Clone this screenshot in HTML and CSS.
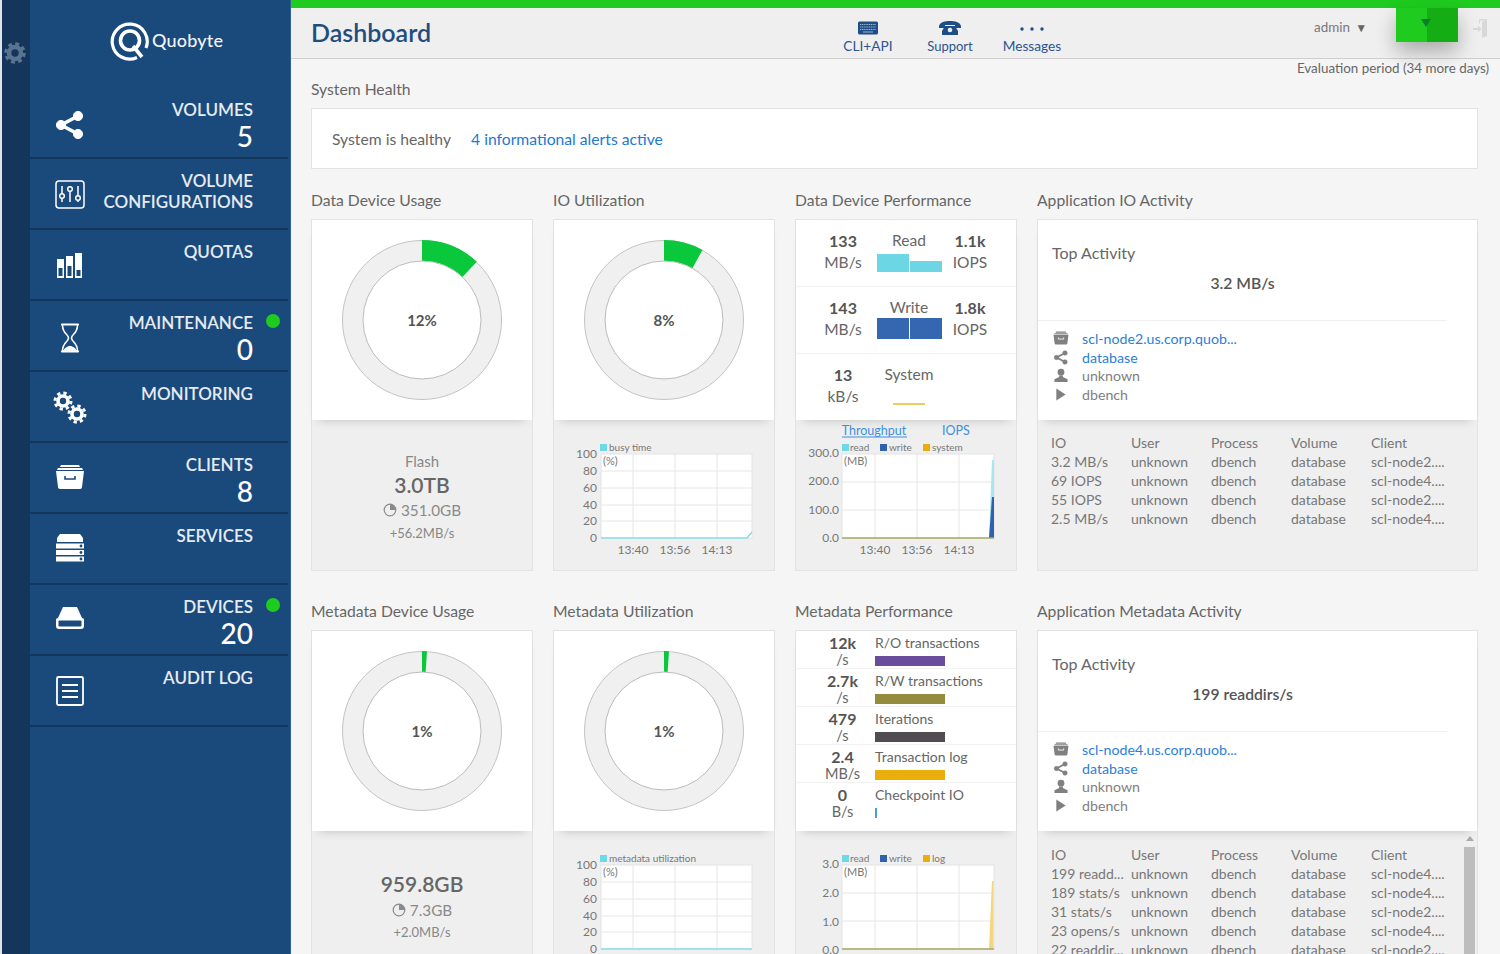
FILE: index.html
```html
<!DOCTYPE html>
<html lang="en">
<head>
<meta charset="utf-8">
<title>Dashboard</title>
<link rel="stylesheet" href="styles.css">
</head>
<body>
<svg class="defs" width="0" height="0" aria-hidden="true">
  <symbol id="i-tray" viewBox="0 0 30 26"><path d="M6 1h18l1 2H5zM3 4h24l1 2H2z" fill="currentColor"/><path d="M1 7h28l-2 16a2 2 0 0 1-2 2H5a2 2 0 0 1-2-2z" fill="currentColor"/><path d="M10 12v3h10v-3" fill="none" stroke="var(--cut,#1a4a7c)" stroke-width="1.6"/></symbol>
  <symbol id="i-share" viewBox="0 0 30 30"><g fill="currentColor" stroke="currentColor"><path d="M23 6 6 15l17 9" fill="none" stroke-width="3.6"/><circle cx="23" cy="6" r="4.6"/><circle cx="6" cy="15" r="4.6"/><circle cx="23" cy="24" r="4.6"/></g></symbol>
  <symbol id="i-user" viewBox="0 0 16 16"><circle cx="8" cy="4.5" r="3.6" fill="currentColor"/><path d="M6 8h4v1.5l5 2.5v3H1v-3l5-2.500z" fill="currentColor"/></symbol>
  <symbol id="i-play" viewBox="0 0 16 16"><path d="M3 1.500 13 8 3 14.500z" fill="currentColor"/></symbol>
  <symbol id="i-pie" viewBox="0 0 14 14"><circle cx="7" cy="7" r="5.800" fill="none" stroke="currentColor" stroke-width="1.200"/><path d="M7 7V1.200A5.800 5.800 0 0 1 12.800 7z" fill="currentColor"/></symbol>
</svg>

<div class="app">
  <aside class="side">
    <div class="strip">
      <svg class="gear" viewBox="0 0 24 24"><circle cx="12" cy="12" r="6.500" fill="none" stroke="currentColor" stroke-width="5"/><circle cx="12" cy="12" r="10" fill="none" stroke="currentColor" stroke-width="3.500" stroke-dasharray="4.200 3.650"/></svg>
    </div>
    <div class="sidemain">
      <div class="logo">
        <svg class="logomark" viewBox="0 0 40 40"><path d="M27 36.500A17.500 17.500 0 1 1 36 27" fill="none" stroke="#fff" stroke-width="3.200"/><circle cx="20" cy="19.500" r="9.500" fill="none" stroke="#fff" stroke-width="3.600"/><path d="M23 25l9 11" stroke="#fff" stroke-width="3.600" fill="none"/></svg>
        <span class="logotext">Quobyte</span>
      </div>
      <nav>
        <a class="item">
          <span class="ico ico-dn"><svg width="30" height="30"><use href="#i-share"/></svg></span>
          <span class="lbl">VOLUMES<b class="cnt">5</b></span>
        </a>
        <a class="item">
          <span class="ico ico-up"><svg width="30" height="30" viewBox="0 0 30 30"><rect x="1" y="2" width="28" height="27" rx="3" fill="none" stroke="currentColor" stroke-width="1.500"/><path d="M7 7v16M15 7v16M23 7v16" stroke="currentColor" stroke-width="1.500"/><g fill="#1a4a7c" stroke="currentColor" stroke-width="1.500"><circle cx="7" cy="17" r="2.300"/><circle cx="15" cy="10" r="2.300"/><circle cx="23" cy="19" r="2.300"/></g></svg></span>
          <span class="lbl">VOLUME<br>CONFIGURATIONS</span>
        </a>
        <a class="item">
          <span class="ico"><svg width="30" height="30" viewBox="0 0 30 30"><path d="M2 8h7v19H2zM11 5h7v22h-7zM20 2h7v25h-7z" fill="currentColor"/><path d="M3.500 17h4v8h-4zM12.500 15h4v10h-4zM21.500 19h4v6h-4z" fill="#1a4a7c"/></svg></span>
          <span class="lbl">QUOTAS</span>
        </a>
        <a class="item">
          <span class="ico ico-dn"><svg width="30" height="32" viewBox="0 0 30 32"><path d="M7 2.500h16M7 29.500h16" stroke="currentColor" stroke-width="2.200" stroke-linecap="round"/><path d="M7.500 3c0 9 6 9 6 13s-6 4-6 13h15c0-9-6-9-6-13s6-4 6-13" fill="none" stroke="currentColor" stroke-width="1.600"/><path d="M8.500 28.500c1-3 4.500-4.500 6.500-4.500s5.500 1.500 6.500 4.500z" fill="currentColor"/></svg></span>
          <span class="lbl">MAINTENANCE<b class="cnt">0</b></span>
          <i class="dot"></i>
        </a>
        <a class="item">
          <span class="ico ico-up"><svg width="34" height="34" viewBox="0 0 34 34"><g fill="none" stroke="currentColor"><circle cx="10" cy="11" r="5" stroke-width="3.600"/><circle cx="10" cy="11" r="8" stroke-width="3" stroke-dasharray="3.300 3"/><circle cx="24" cy="24" r="5" stroke-width="3.600"/><circle cx="24" cy="24" r="8" stroke-width="3" stroke-dasharray="3.300 3"/></g></svg></span>
          <span class="lbl">MONITORING</span>
        </a>
        <a class="item">
          <span class="ico ico-up2"><svg width="30" height="26"><use href="#i-tray"/></svg></span>
          <span class="lbl">CLIENTS<b class="cnt">8</b></span>
        </a>
        <a class="item">
          <span class="ico ico-up2"><svg width="30" height="30" viewBox="0 0 30 30"><path d="M5 1h20l3 4v4H2V5z" fill="currentColor"/><path d="M1 10.500h28v5H1zM1 17h28v5H1zM1 23.500h28v5H1z" fill="currentColor"/><g fill="#1a4a7c"><circle cx="26" cy="13" r="1.400"/><circle cx="26" cy="19.500" r="1.400"/><circle cx="26" cy="26" r="1.400"/></g></svg></span>
          <span class="lbl">SERVICES</span>
        </a>
        <a class="item">
          <span class="ico ico-up3"><svg width="30" height="26" viewBox="0 0 30 26"><path d="M8 2h14l5 11H3z" fill="currentColor"/><path d="M3 13h24a2 2 0 0 1 2 2v6a3 3 0 0 1-3 3H4a3 3 0 0 1-3-3v-6a2 2 0 0 1 2-2z" fill="currentColor"/><rect x="3.500" y="15.500" width="23" height="6" rx="1" fill="#1a4a7c"/></svg></span>
          <span class="lbl">DEVICES<b class="cnt">20</b></span>
          <i class="dot"></i>
        </a>
        <a class="item">
          <span class="ico ico-up"><svg width="30" height="32" viewBox="0 0 30 32"><rect x="2" y="2" width="26" height="28" rx="1.500" fill="none" stroke="currentColor" stroke-width="1.800"/><path d="M7 10h16M7 16h16M7 22h16" stroke="currentColor" stroke-width="1.800"/></svg></span>
          <span class="lbl">AUDIT LOG</span>
        </a>
      </nav>
    </div>
  </aside>

  <div class="page">
    <div class="topbar"></div>
    <header class="head">
      <h1 class="title">Dashboard</h1>
      <div class="tool">
        <svg width="22" height="14" viewBox="0 0 22 14"><rect x="1" y="0.500" width="20" height="13" rx="1.500" fill="#1f4d87"/><path d="M3 3.500h16M3 6h16M3 8.500h16" stroke="#9db4d0" stroke-width="1" stroke-dasharray="1.200 .6"/><path d="M6 11h10" stroke="#9db4d0"/></svg>
        <span>CLI+API</span>
      </div>
      <div class="tool">
        <svg width="24" height="14" viewBox="0 0 24 14"><path d="M1 5C2 1 7 0 12 0s10 1 11 5v2h-6V4H7v3H1z" fill="#1f4d87"/><path d="M7 5h10l3 5v4H4v-4z" fill="#1f4d87"/><circle cx="12" cy="9" r="2.300" fill="#efefef"/></svg>
        <span class="tool-s">Support</span>
      </div>
      <div class="tool">
        <svg width="24" height="14" viewBox="0 0 24 14"><g fill="#1f4d87"><circle cx="2" cy="8" r="1.700"/><circle cx="12" cy="8" r="1.700"/><circle cx="22" cy="8" r="1.700"/></g></svg>
        <span>Messages</span>
      </div>
      <div class="admin">admin <span class="caret">▼</span></div>
      <div class="alert"><span class="alert-l"></span><span class="alert-r"><i class="tri"></i></span></div>
      <svg class="exit" width="16" height="20" viewBox="0 0 16 20"><path d="M7 1h8v17l-5 2V4l3-1.500H8v3H7z" fill="#d8d8d8"/><path d="M1 10h5V7.500l3.500 3.500L6 14.500V12H1z" fill="#d8d8d8"/></svg>
    </header>

    <main class="content">
      <div class="evalrow">Evaluation period (34 more days)</div>
      <div class="stitle">System Health</div>
      <div class="health"><span>System is healthy</span><a class="healthlink">4 informational alerts active</a></div>

      <div class="grid">
        <section>
          <div class="stitle">Data Device Usage</div>
          <div class="card">
            <div class="white">
              <svg class="donut" width="220" height="200" viewBox="0 0 220 200"><circle class="ring" cx="110" cy="100" r="79.500"/><circle class="seg" cx="110" cy="100" r="69.500" stroke-dasharray="52.400 500" transform="rotate(-90 110 100)"/><circle class="hole" cx="110" cy="100" r="59"/><text class="pct" x="110" y="106">12%</text></svg>
            </div>
            <div class="gray usage">
              <div class="u-name">Flash</div>
              <div class="u-total">3.0TB</div>
              <div class="u-used"><svg width="14" height="14"><use href="#i-pie"/></svg>351.0GB</div>
              <div class="u-rate">+56.2MB/s</div>
            </div>
          </div>
        </section>

        <section>
          <div class="stitle">IO Utilization</div>
          <div class="card">
            <div class="white">
              <svg class="donut" width="220" height="200" viewBox="0 0 220 200"><circle class="ring" cx="110" cy="100" r="79.500"/><circle class="seg" cx="110" cy="100" r="69.500" stroke-dasharray="34.900 500" transform="rotate(-90 110 100)"/><circle class="hole" cx="110" cy="100" r="59"/><text class="pct" x="110" y="106">8%</text></svg>
            </div>
            <div class="gray">
              <svg class="chart" width="220" height="150" viewBox="554 420 220 150">
                <rect class="plot" x="601" y="454" width="151" height="84"/>
                <path class="gl" d="M633 454v84M675 454v84M717 454v84M601 471h151M601 488h151M601 505h151M601 521h151"/>
                <rect x="600" y="444" width="7" height="7" fill="#6fd8e6"/><text class="leg" x="609" y="451">busy time</text>
                <text class="unit" x="603" y="465">(%)</text>
                <g class="ax"><text x="597" y="458">100</text><text x="597" y="475">80</text><text x="597" y="492">60</text><text x="597" y="509">40</text><text x="597" y="525">20</text><text x="597" y="542">0</text></g>
                <g class="tx"><text x="633" y="554">13:40</text><text x="675" y="554">13:56</text><text x="717" y="554">14:13</text></g>
                <path d="M601 538h146l5-6" fill="none" stroke="#8adbe6" stroke-width="1.500"/>
              </svg>
            </div>
          </div>
        </section>

        <section>
          <div class="stitle">Data Device Performance</div>
          <div class="card">
            <div class="white">
              <div class="prow">
                <div class="pcol"><b>133</b><span>MB/s</span></div>
                <div class="pmid"><span class="plabel">Read</span><div class="pbars"><i class="b-read h18"></i><i class="b-read h11"></i></div></div>
                <div class="pcol pr"><b>1.1k</b><span>IOPS</span></div>
              </div>
              <div class="prow">
                <div class="pcol"><b>143</b><span>MB/s</span></div>
                <div class="pmid"><span class="plabel">Write</span><div class="pbars"><i class="b-write h20"></i><i class="b-write h20"></i></div></div>
                <div class="pcol pr"><b>1.8k</b><span>IOPS</span></div>
              </div>
              <div class="prow prow-last">
                <div class="pcol"><b>13</b><span>kB/s</span></div>
                <div class="pmid"><span class="plabel">System</span><div class="pbars"><i class="b-sys"></i></div></div>
              </div>
            </div>
            <div class="gray">
              <svg class="chart" width="220" height="150" viewBox="796 420 220 150">
                <text class="tab on" x="874" y="435">Throughput</text><text class="tab" x="956" y="435">IOPS</text>
                <path d="M842 437h65" stroke="#3d8ee0" stroke-width="1"/>
                <rect class="plot" x="842" y="454" width="152" height="84"/>
                <path class="gl" d="M875 454v84M917 454v84M959 454v84M842 482h152M842 510h152"/>
                <rect x="842" y="444" width="7" height="7" fill="#6fd8e6"/><text class="leg" x="850" y="451">read</text>
                <rect x="880" y="444" width="7" height="7" fill="#2f62ab"/><text class="leg" x="889" y="451">write</text>
                <rect x="923" y="444" width="7" height="7" fill="#e9ae0b"/><text class="leg" x="932" y="451">system</text>
                <text class="unit" x="844" y="465">(MB)</text>
                <g class="ax"><text x="839" y="457">300.0</text><text x="839" y="485">200.0</text><text x="839" y="514">100.0</text><text x="839" y="542">0.0</text></g>
                <g class="tx"><text x="875" y="554">13:40</text><text x="917" y="554">13:56</text><text x="959" y="554">14:13</text></g>
                <path d="M989 538l3-78h2v78z" fill="#a7e7ef"/>
                <path d="M989 538l3-41h2v41z" fill="#2f62ab"/>
                <path d="M842 538h152" stroke="#a8a860" stroke-width="1.500"/>
              </svg>
            </div>
          </div>
        </section>

        <section>
          <div class="stitle">Application IO Activity</div>
          <div class="card">
            <div class="white app-w">
              <div class="top-t">Top Activity</div>
              <div class="top-v">3.2 MB/s</div>
              <div class="top-list">
                <div><svg width="16" height="14"><use href="#i-tray"/></svg><a>scl-node2.us.corp.quob...</a></div>
                <div><svg width="16" height="15"><use href="#i-share"/></svg><a>database</a></div>
                <div><svg width="16" height="15"><use href="#i-user"/></svg><span>unknown</span></div>
                <div><svg width="16" height="15"><use href="#i-play"/></svg><span>dbench</span></div>
              </div>
            </div>
            <div class="gray tbl tbl-io">
              <div class="trow"><span>IO</span><span>User</span><span>Process</span><span>Volume</span><span>Client</span></div>
              <div class="trow"><span>3.2 MB/s</span><span>unknown</span><span>dbench</span><span>database</span><span>scl-node2....</span></div>
              <div class="trow"><span>69 IOPS</span><span>unknown</span><span>dbench</span><span>database</span><span>scl-node4....</span></div>
              <div class="trow"><span>55 IOPS</span><span>unknown</span><span>dbench</span><span>database</span><span>scl-node2....</span></div>
              <div class="trow"><span>2.5 MB/s</span><span>unknown</span><span>dbench</span><span>database</span><span>scl-node4....</span></div>
            </div>
          </div>
        </section>

        <section>
          <div class="stitle">Metadata Device Usage</div>
          <div class="card">
            <div class="white">
              <svg class="donut" width="220" height="200" viewBox="0 0 220 200"><circle class="ring" cx="110" cy="100" r="79.500"/><circle class="seg" cx="110" cy="100" r="69.500" stroke-dasharray="4.400 500" transform="rotate(-90 110 100)"/><circle class="hole" cx="110" cy="100" r="59"/><text class="pct" x="110" y="106">1%</text></svg>
            </div>
            <div class="gray usage usage-nn">
              <div class="u-total">959.8GB</div>
              <div class="u-used"><svg width="14" height="14"><use href="#i-pie"/></svg>7.3GB</div>
              <div class="u-rate">+2.0MB/s</div>
            </div>
          </div>
        </section>

        <section>
          <div class="stitle">Metadata Utilization</div>
          <div class="card">
            <div class="white">
              <svg class="donut" width="220" height="200" viewBox="0 0 220 200"><circle class="ring" cx="110" cy="100" r="79.500"/><circle class="seg" cx="110" cy="100" r="69.500" stroke-dasharray="4.400 500" transform="rotate(-90 110 100)"/><circle class="hole" cx="110" cy="100" r="59"/><text class="pct" x="110" y="106">1%</text></svg>
            </div>
            <div class="gray">
              <svg class="chart" width="220" height="150" viewBox="554 420 220 150">
                <rect class="plot" x="601" y="454" width="151" height="84"/>
                <path class="gl" d="M633 454v84M675 454v84M717 454v84M601 471h151M601 488h151M601 505h151M601 521h151"/>
                <rect x="600" y="444" width="7" height="7" fill="#6fd8e6"/><text class="leg" x="609" y="451">metadata utilization</text>
                <text class="unit" x="603" y="465">(%)</text>
                <g class="ax"><text x="597" y="458">100</text><text x="597" y="475">80</text><text x="597" y="492">60</text><text x="597" y="509">40</text><text x="597" y="525">20</text><text x="597" y="542">0</text></g>
                <path d="M601 538h151" fill="none" stroke="#8adbe6" stroke-width="1.500"/>
              </svg>
            </div>
          </div>
        </section>

        <section>
          <div class="stitle">Metadata Performance</div>
          <div class="card">
            <div class="white">
              <div class="mrow"><div class="mval"><b>12k</b><span>/s</span></div><div class="mmid"><span>R/O transactions</span><i class="mbar c-ro"></i></div></div>
              <div class="mrow"><div class="mval"><b>2.7k</b><span>/s</span></div><div class="mmid"><span>R/W transactions</span><i class="mbar c-rw"></i></div></div>
              <div class="mrow"><div class="mval"><b>479</b><span>/s</span></div><div class="mmid"><span>Iterations</span><i class="mbar c-it"></i></div></div>
              <div class="mrow"><div class="mval"><b>2.4</b><span>MB/s</span></div><div class="mmid"><span>Transaction log</span><i class="mbar c-tl"></i></div></div>
              <div class="mrow mrow-last"><div class="mval"><b>0</b><span>B/s</span></div><div class="mmid"><span>Checkpoint IO</span><i class="mbar c-cp"></i></div></div>
            </div>
            <div class="gray">
              <svg class="chart" width="220" height="150" viewBox="796 420 220 150">
                <rect class="plot" x="842" y="454" width="152" height="84"/>
                <path class="gl" d="M875 454v84M917 454v84M959 454v84M842 482h152M842 510h152"/>
                <rect x="842" y="444" width="7" height="7" fill="#6fd8e6"/><text class="leg" x="850" y="451">read</text>
                <rect x="880" y="444" width="7" height="7" fill="#2f62ab"/><text class="leg" x="889" y="451">write</text>
                <rect x="923" y="444" width="7" height="7" fill="#e9ae0b"/><text class="leg" x="932" y="451">log</text>
                <text class="unit" x="844" y="465">(MB)</text>
                <g class="ax"><text x="839" y="457">3.0</text><text x="839" y="486">2.0</text><text x="839" y="515">1.0</text><text x="839" y="543">0.0</text></g>
                <path d="M989 538l3-68h1.500v68z" fill="#f3d67c"/>
                <path d="M842 538h152" stroke="#a8a860" stroke-width="1.500"/>
              </svg>
            </div>
          </div>
        </section>

        <section>
          <div class="stitle">Application Metadata Activity</div>
          <div class="card">
            <div class="white app-w">
              <div class="top-t">Top Activity</div>
              <div class="top-v">199 readdirs/s</div>
              <div class="top-list">
                <div><svg width="16" height="14"><use href="#i-tray"/></svg><a>scl-node4.us.corp.quob...</a></div>
                <div><svg width="16" height="15"><use href="#i-share"/></svg><a>database</a></div>
                <div><svg width="16" height="15"><use href="#i-user"/></svg><span>unknown</span></div>
                <div><svg width="16" height="15"><use href="#i-play"/></svg><span>dbench</span></div>
              </div>
            </div>
            <div class="gray tbl">
              <div class="sbar"><i class="sb-up"></i><i class="sb-th"></i></div>
              <div class="trow"><span>IO</span><span>User</span><span>Process</span><span>Volume</span><span>Client</span></div>
              <div class="trow"><span>199 readd...</span><span>unknown</span><span>dbench</span><span>database</span><span>scl-node4....</span></div>
              <div class="trow"><span>189 stats/s</span><span>unknown</span><span>dbench</span><span>database</span><span>scl-node4....</span></div>
              <div class="trow"><span>31 stats/s</span><span>unknown</span><span>dbench</span><span>database</span><span>scl-node2....</span></div>
              <div class="trow"><span>23 opens/s</span><span>unknown</span><span>dbench</span><span>database</span><span>scl-node4....</span></div>
              <div class="trow"><span>22 readdir...</span><span>unknown</span><span>dbench</span><span>database</span><span>scl-node2....</span></div>
            </div>
          </div>
        </section>
      </div>
    </main>
  </div>
</div>
</body>
</html>
```

FILE: styles.css
```css
* { box-sizing: border-box; }
html, body { margin: 0; padding: 0; height: 100%; overflow: hidden; }
body { font-family: Lato, "Liberation Sans", sans-serif; background: #f5f5f5; color: #666; }
.defs { position: absolute; }
.app { display: flex; height: 954px; overflow: hidden; }

/* sidebar */
.side { flex: 0 0 291px; min-width: 0; display: flex; padding-left: 2px; background: #1a4a7c; border-right: 1px solid #2f6096; box-shadow: inset 2px 0 0 #dfe5ec; }
.strip { flex: 0 0 28px; background: #14365a; padding: 42px 2px 0; }
.gear { display: block; width: 22px; height: 22px; margin-left: 0; color: #5a7490; }
.sidemain { flex: 1; min-width: 0; }
.logo { height: 88px; padding: 20px 0 0 80px; display: flex; align-items: flex-start; color: #fff; }
.logomark { width: 40px; height: 40px; flex: none; margin-top: 1px; }
.logotext { font-size: 18px; font-weight: 500; line-height: 40px; margin-left: 2px; letter-spacing: .2px; color: #f1f4f8; }
nav { display: block; }
.item { position: relative; display: flex; height: 71px; margin-right: 2px; border-bottom: 2px solid #14365a; color: #fff; }
.ico { flex: 0 0 60px; margin-left: 10px; display: flex; align-items: center; justify-content: center; color: #fff; padding-top: 3px; }
.ico-dn { padding-top: 5px; }
.ico-up { padding-top: 1px; }
.ico-up2 { padding-top: 0; padding-bottom: 1px; }
.ico-up3 { padding-top: 0; padding-bottom: 3px; }
.ico svg { display: block; }
.lbl { flex: 1; min-width: 0; text-align: right; padding: 11px 35px 0 0; font-size: 17px; line-height: 21px; font-weight: 600; color: #e6ebf1; white-space: nowrap; }
.cnt { display: block; font-size: 28px; font-weight: 500; line-height: 32px; color: #fff; }
.dot { position: absolute; right: 8px; top: 13px; width: 14px; height: 14px; border-radius: 50%; background: #1ecb1e; }

/* header */
.page { flex: 1; min-width: 0; display: flex; flex-direction: column; }
.topbar { height: 8px; background: #1ecb1e; flex: none; }
.head { flex: none; height: 51px; display: flex; align-items: flex-start; padding-left: 20px; background: #efefef; border-bottom: 1px solid #cfcfcf; }
.title { flex: 0 0 516px; margin: 0; font-size: 25px; font-weight: 600; line-height: 49px; color: #1f4d80; }
.tool { flex: 0 0 82px; display: flex; flex-direction: column; align-items: center; padding-top: 13px; color: #2e5490; font-size: 13.7px; line-height: 18px; }
.tool svg { display: block; margin-bottom: 2px; }
.tool-s { font-size: 13px; }
.admin { margin-left: 241px; flex: 0 0 82px; padding-top: 11px; font-size: 13.400px; line-height: 17px; color: #777; }
.caret { font-size: 12px; margin-left: 2px; color: #666; }
.alert { flex: 0 0 62px; height: 34px; display: flex; box-shadow: 0 10px 20px rgba(0,0,0,.28); }
.alert-l { flex: 1; background: #1ecb1e; }
.alert-r { flex: 1; background: #14ad14; position: relative; }
.tri { position: absolute; left: -6px; top: 11px; border: 5px solid transparent; border-width: 8px 5px 0; border-top-color: #0b7f2e; }
.exit { margin: 10px 0 0 14px; flex: none; }

/* content */
.content { flex: 1; min-height: 0; padding: 0 22px 0 20px; overflow: hidden; }
.evalrow { height: 19px; margin-right: -11px; text-align: right; font-size: 13.400px; line-height: 19px; color: #666; }
.stitle { font-size: 15.700px; line-height: 22px; margin-bottom: 8px; color: #666; }
.health { height: 61px; margin-bottom: 20px; padding: 0 20px; display: flex; align-items: center; background: #fff; border: 1px solid #e3e3e3; font-size: 15.700px; color: #666; }
.healthlink { margin-left: 20px; color: #1e78d2; }
.grid { display: grid; grid-template-columns: 222px 222px 222px 1fr; column-gap: 20px; row-gap: 29px; }
.card { border: 1px solid #e3e3e3; background: #efefef; height: 352px; }
.white { height: 200px; background: #fff; box-shadow: 0 6px 10px -7px rgba(0,0,0,.25); position: relative; }
.gray { position: relative; height: 150px; }
.donut, .chart { display: block; }

/* donuts */
.ring { fill: #f0f0f0; stroke: #c4c4c4; stroke-width: 1; }
.seg { fill: none; stroke: #0ac83c; stroke-width: 21; }
.hole { fill: #fff; stroke: #bbb; stroke-width: 1; }
.pct { font-size: 15px; font-weight: 700; text-anchor: middle; fill: #555; }

/* usage */
.usage { text-align: center; padding-top: 31px; color: #888; }
.usage-nn { padding-top: 37px; }
.u-name { font-size: 15px; line-height: 20px; }
.u-total { font-size: 21px; font-weight: 600; line-height: 28px; color: #666; }
.usage-nn .u-total { line-height: 31px; }
.u-used { font-size: 15.300px; line-height: 22px; display: flex; align-items: center; justify-content: center; gap: 4px; color: #8a8a8a; }
.u-rate { font-size: 13px; line-height: 22px; margin-top: 1px; }
.usage-nn .u-rate { margin-top: 0; }

/* charts */
.plot { fill: #fff; stroke: #e4e4e4; }
.gl { fill: none; stroke: #e6e6e6; stroke-width: 1; }
.leg { font-size: 10px; fill: #777; }
.unit { font-size: 11px; fill: #777; }
.ax text { font-size: 12px; text-anchor: end; fill: #777; }
.tx text { font-size: 12px; text-anchor: middle; fill: #777; }
.tab { font-size: 12.500px; text-anchor: middle; fill: #3d8ee0; }

/* performance */
.prow { height: 67px; display: flex; padding: 10px 0 0 14px; border-bottom: 1px solid #f2f2f2; }
.prow-last { border-bottom: 0; }
.pcol { flex: 0 0 66px; text-align: center; font-size: 15.500px; line-height: 21.500px; color: #666; }
.pcol b { display: block; font-size: 16px; font-weight: 700; color: #555; }
.pcol span { display: block; }
.pr { flex: 0 0 56px; }
.pmid { flex: 0 0 66px; text-align: center; font-size: 15.500px; line-height: 20px; color: #666; }
.plabel { display: block; white-space: nowrap; }
.pbars { height: 22px; display: flex; align-items: flex-end; justify-content: center; gap: 1px; }
.pbars i { display: block; flex: 0 0 32px; }
.b-read { background: #6dd6e4; }
.b-write { background: #3566b0; }
.h18 { height: 18px; }
.h11 { height: 11px; }
.h20 { height: 21px; }
.pbars .b-sys { height: 2px; margin-bottom: 1px; background: #f0cb5e; }

/* metadata performance */
.mrow { height: 38px; display: flex; border-bottom: 1px solid #f2f2f2; }
.mrow-last { border-bottom: 0; }
.mval { flex: 0 0 79px; padding: 2px 0 0 14px; text-align: center; font-size: 14.500px; line-height: 16px; color: #666; }
.mval b { display: block; font-size: 16px; line-height: 19px; font-weight: 700; color: #555; }
.mval span { display: block; }
.mmid { flex: 1; font-size: 14px; line-height: 18px; padding-top: 3px; color: #666; }
.mmid span { display: block; }
.mbar { display: block; width: 70px; height: 10px; margin-top: 4px; }
.c-ro { background: #6a4c9c; }
.c-rw { background: #948b3c; }
.c-it { background: #4f4d52; }
.c-tl { background: #e9ae0b; }
.c-cp { width: 2px; background: #4a9fd8; }

/* activity */
.app-w { padding-top: 22px; }
.top-t { padding-left: 14px; font-size: 16px; line-height: 22px; color: #666; }
.top-v { margin: 8px 30px 0 0; text-align: center; font-size: 15.700px; font-weight: 600; line-height: 22px; color: #555; padding-bottom: 26px; border-bottom: 1px solid #f0f0f0; }
.top-list { padding: 8px 0 0 15px; color: #808080; }
.top-list div { display: flex; align-items: center; height: 18.700px; font-size: 14.200px; gap: 13px; }
.top-list svg { flex: none; color: #808080; --cut: #fff; }
.top-list a { color: #2b80d8; }
.tbl { padding: 14px 0 0 13px; font-size: 14px; line-height: 19px; color: #777; }
.tbl-io { padding-top: 13px; }
.trow { display: grid; grid-template-columns: repeat(5, 80px); white-space: nowrap; }
.sbar { position: absolute; right: 2px; top: 0; width: 11px; height: 100%; }
.sb-up { display: block; width: 0; margin: 5px auto 0; border: 4px solid transparent; border-top: 0; border-bottom: 5px solid #aaa; }
.sb-th { display: block; height: 120px; margin-top: 6px; background: #bdbdbd; }
```
